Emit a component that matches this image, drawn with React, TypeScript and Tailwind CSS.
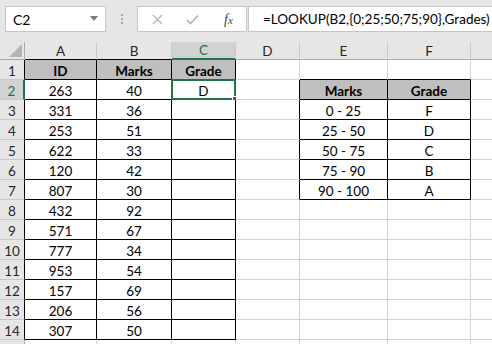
import React from "react";

const COLS = [
  { w: 72, l: "A" },
  { w: 75, l: "B" },
  { w: 64, l: "C" },
  { w: 64, l: "D" },
  { w: 88, l: "E" },
  { w: 83, l: "F" },
  { w: 60, l: "G" },
];

const ids = [263, 331, 253, 622, 120, 807, 432, 571, 777, 953, 157, 206, 307];
const marks = [40, 36, 51, 33, 42, 30, 92, 67, 34, 54, 69, 56, 50];
const t2 = [
  ["0 - 25", "F"],
  ["25 - 50", "D"],
  ["50 - 75", "C"],
  ["75 - 90", "B"],
  ["90 - 100", "A"],
];

function cellText(r: number, c: number): { t: string; bold?: boolean } {
  if (r === 1) {
    if (c === 0) return { t: "ID", bold: true };
    if (c === 1) return { t: "Marks", bold: true };
    if (c === 2) return { t: "Grade", bold: true };
  }
  if (r >= 2 && r <= 14) {
    if (c === 0) return { t: String(ids[r - 2]) };
    if (c === 1) return { t: String(marks[r - 2]) };
    if (c === 2 && r === 2) return { t: "D" };
  }
  if (r === 2) {
    if (c === 4) return { t: "Marks", bold: true };
    if (c === 5) return { t: "Grade", bold: true };
  }
  if (r >= 3 && r <= 7) {
    if (c === 4) return { t: t2[r - 3][0] };
    if (c === 5) return { t: t2[r - 3][1] };
  }
  return { t: "" };
}

const inT1 = (r: number, c: number) => r >= 1 && r <= 14 && c >= 0 && c <= 2;
const inT2 = (r: number, c: number) => r >= 2 && r <= 7 && c >= 4 && c <= 5;
const inT = (r: number, c: number) => inT1(r, c) || inT2(r, c);
const isHead = (r: number, c: number) => (r === 1 && c <= 2) || (r === 2 && (c === 4 || c === 5));

function Cell({ r, c }: { r: number; c: number }) {
  const { t, bold } = cellText(r, c);
  const right = inT(r, c) || inT(r, c + 1) ? "border-r-black" : "border-r-[#d4d4d4]";
  const bottom = inT(r, c) || inT(r + 1, c) ? "border-b-black" : "border-b-[#d4d4d4]";
  const bg = isHead(r, c) ? "bg-[#bfbfbf]" : "bg-white";
  return (
    <div
      className={`relative shrink-0 h-[20px] border-r border-b ${right} ${bottom} ${bg} flex items-center justify-center pt-[3px] text-[13.5px] text-black ${bold ? "font-bold" : ""}`}
      style={{ width: COLS[c].w }}
    >
      {t}
      {r === 2 && c === 2 && (
        <>
          <div className="absolute -left-[1px] -top-[1px] -right-[1px] -bottom-[1px] border-2 border-[#217346]" />
          <div className="absolute -right-[4px] -bottom-[4px] w-[7px] h-[7px] bg-[#217346] border border-white" />
        </>
      )}
    </div>
  );
}

export default function App() {
  const rows = Array.from({ length: 15 }, (_, i) => i + 1);
  return (
    <div
      className="w-[492px] h-[344px] overflow-hidden bg-white"
      style={{ fontFamily: "Lato, 'Liberation Sans', sans-serif" }}
    >
      {/* formula bar */}
      <div className="h-[42px] bg-[#e6e6e6] flex items-start pt-[6px] pl-[5px]">
        <div className="w-[101px] h-[26px] bg-white border border-[#c6c6c6] flex items-center pl-[7px] pr-[7px] text-[14px] text-black">
          <span className="flex-1 pt-[1px]">C2</span>
          <svg width="8" height="5" viewBox="0 0 8 5" className="mt-[-2px]">
            <path d="M0 0 L8 0 L4 5 Z" fill="#7a7a7a" />
          </svg>
        </div>
        <div className="w-[31px] h-[26px] flex flex-col items-center justify-center gap-[2px]">
          <div className="w-[2px] h-[2px] bg-[#a6a6a6]" />
          <div className="w-[2px] h-[2px] bg-[#a6a6a6]" />
          <div className="w-[2px] h-[2px] bg-[#a6a6a6]" />
        </div>
        <div className="w-[110px] h-[26px] bg-white border border-[#c6c6c6] flex items-center">
          <svg width="11" height="11" viewBox="0 0 11 11" className="ml-[14px]">
            <path d="M1 1 L10 10 M10 1 L1 10" stroke="#b3b3b3" strokeWidth="1.2" />
          </svg>
          <svg width="13" height="11" viewBox="0 0 13 11" className="ml-[23px]">
            <path d="M1 6 L4.5 9.5 L12 1.5" stroke="#b3b3b3" strokeWidth="1.6" fill="none" />
          </svg>
          <span
            className="ml-[25px] text-[14px] italic text-[#444]"
            style={{ fontFamily: "'Liberation Serif', serif" }}
          >
            f<span className="text-[11px]">x</span>
          </span>
        </div>
        <div className="ml-[1px] flex-1 min-w-0 h-[26px] bg-white border border-[#c6c6c6] border-r-0 flex items-center pl-[14px] text-[13.5px] text-black whitespace-nowrap">
          <span className="pt-[1px]">=LOOKUP(B2,{"{"}0;25;50;75;90{"}"},Grades)</span>
        </div>
      </div>

      {/* column headers */}
      <div className="flex h-[18px] bg-[#e6e6e6]">
        <div className="relative w-[25px] shrink-0 h-[18px] border-r border-b border-[#ababab]">
          <svg width="13" height="13" viewBox="0 0 13 13" className="absolute right-[2px] bottom-[2px]">
            <path d="M13 0 L13 13 L0 13 Z" fill="#b4b4b4" />
          </svg>
        </div>
        {COLS.map((col, c) => {
          const sel = c === 2;
          const bottom = sel
            ? "border-b-2 border-b-[#217346]"
            : c <= 1
            ? "border-b border-b-black"
            : "border-b border-b-[#ababab]";
          return (
            <div
              key={col.l}
              className={`shrink-0 h-[18px] border-r border-r-[#c8c8c8] ${bottom} flex items-center justify-center text-[13.5px] pt-[1px] ${
                sel ? "bg-[#d2d2d2] text-[#217346]" : "text-[#262626]"
              }`}
              style={{ width: col.w }}
            >
              {c < 6 ? col.l : ""}
            </div>
          );
        })}
      </div>

      {/* rows */}
      {rows.map((r) => {
        const sel = r === 2;
        const rb = sel
          ? "border-r-2 border-r-[#217346]"
          : r <= 14
          ? "border-r border-r-black"
          : "border-r border-r-[#ababab]";
        return (
          <div key={r} className="flex h-[20px]">
            <div
              className={`w-[25px] shrink-0 h-[20px] ${rb} border-b border-b-[#c8c8c8] flex items-center justify-center pt-[3px] text-[13.5px] ${
                sel ? "bg-[#d2d2d2] text-[#217346]" : "bg-[#e6e6e6] text-[#262626]"
              }`}
            >
              {r <= 14 ? r : ""}
            </div>
            {COLS.map((_, c) => (
              <Cell key={c} r={r} c={c} />
            ))}
          </div>
        );
      })}
    </div>
  );
}
